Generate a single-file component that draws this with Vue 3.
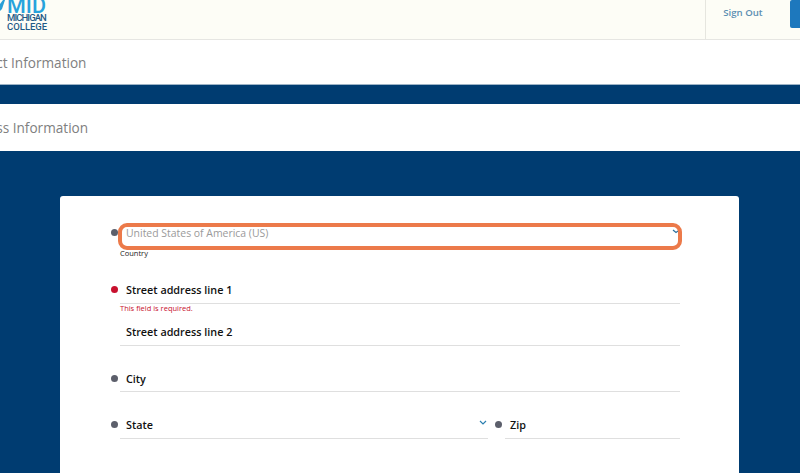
<script setup>
const sections = [
  { title: 'Contact Information', cls: 'sec-contact' },
  { title: 'Address Information', cls: 'sec-address' }
]
</script>

<template>
  <div class="page">
    <header class="topbar">
      <div class="logo">
        <svg class="swoosh" width="6" height="14" viewBox="0 0 6 14"><path d="M0 4 L3 0 L5 0 L2 9 L0 11 Z" fill="#2a9fd6" /></svg>
        <div class="logo-text">
          <div class="logo-mid">MID</div>
          <div class="logo-sub logo-michigan">MICHIGAN</div>
          <div class="logo-sub">COLLEGE</div>
        </div>
      </div>
      <div class="signout">Sign Out</div>
      <div class="topbtn"></div>
    </header>

    <section class="band" :class="sections[0].cls"><h2>{{ sections[0].title }}</h2></section>
    <section class="band" :class="sections[1].cls"><h2>{{ sections[1].title }}</h2></section>

    <main class="navy">
      <div class="card">
        <div class="row row-country">
          <span class="dot"></span>
          <div class="field">
            <div class="select-val">United States of America (US)</div>
            <svg class="chev chev-country" width="7" height="5" viewBox="0 0 7 5"><path d="M1 1 L4 3.5 L6 2" fill="none" stroke="#2b6f9e" stroke-width="1.2" /></svg>
            <div class="sublabel">Country</div>
          </div>
          <div class="highlight"></div>
        </div>

        <div class="row row-s1">
          <span class="dot dot-red"></span>
          <div class="field">
            <div class="input">Street address line 1</div>
            <div class="error">This field is required.</div>
          </div>
        </div>

        <div class="row row-s2">
          <span class="dot dot-none"></span>
          <div class="field"><div class="input">Street address line 2</div></div>
        </div>

        <div class="row row-city">
          <span class="dot"></span>
          <div class="field"><div class="input input-city">City</div></div>
        </div>

        <div class="row row-state">
          <span class="dot"></span>
          <div class="field field-state">
            <div class="input">State</div>
            <svg class="chev chev-state" width="8" height="5" viewBox="0 0 8 5"><path d="M1 1 L4 4 L7 1" fill="none" stroke="#2b7fb0" stroke-width="1.2" /></svg>
          </div>
          <span class="dot dot-zip"></span>
          <div class="field field-zip"><div class="input">Zip</div></div>
        </div>
      </div>
    </main>
  </div>
</template>

<style>
html, body { margin: 0; padding: 0; background: #003c71; }
</style>

<style scoped>
.page {
  width: 800px;
  height: 473px;
  overflow: hidden;
  display: flex;
  flex-direction: column;
  font-family: "Open Sans", "Liberation Sans", sans-serif;
  background: #003c71;
}
.topbar {
  height: 39px;
  flex: none;
  background: #fdfdf6;
  border-bottom: 1px solid #e6e6e2;
  display: flex;
  align-items: stretch;
  overflow: hidden;
}
.logo {
  display: flex;
  align-items: flex-start;
  flex: 1;
}
.swoosh { flex: none; margin-right: 1px; }
.logo-text { margin-top: -9px; }
.logo-mid {
  font-family: "Roboto", "Liberation Sans", sans-serif;
  font-size: 21.5px;
  line-height: 29px;
  height: 23px;
  font-weight: 500;
  color: #27a3dc;
}
.logo-sub {
  font-family: "Roboto", "Liberation Sans", sans-serif;
  font-size: 9.5px;
  line-height: 8.5px;
  font-weight: 500;
  color: #1f5a86;
}
.logo-michigan { letter-spacing: -0.9px; }
.signout {
  width: 74px;
  padding-right: 10px;
  flex: none;
  border-left: 1px solid #e6e6df;
  font-size: 9.6px;
  font-weight: 600;
  color: #5b8fb2;
  text-align: center;
  line-height: 26px;
}
.topbtn {
  width: 10px;
  height: 28px;
  flex: none;
  background: #1d78bd;
  border-radius: 2px 0 0 2px;
}
.band {
  flex: none;
  background: #fff;
  overflow: hidden;
  display: flex;
  align-items: center;
}
.band h2 {
  margin: 0;
  font-size: 13.6px;
  font-weight: 400;
  color: #808080;
  white-space: nowrap;
}
.sec-contact { height: 45px; border-bottom: 1px solid #9db3c6; box-sizing: border-box; }
.sec-contact h2 { margin-left: -41.3px; }
.sec-address { height: 47px; margin-top: 19px; }
.sec-address h2 { margin-left: -42.2px; }
.navy {
  flex: none;
  background: #003c71;
  padding: 45px 61px 0 60px;
}
.card {
  height: 320px;
  background: #fff;
  border-radius: 3px;
  padding-top: 28px;
  padding-left: 51px;
  padding-right: 59px;
  box-sizing: border-box;
}
.row {
  display: flex;
  align-items: flex-start;
  position: relative;
}
.dot {
  width: 7px;
  height: 7px;
  border-radius: 50%;
  background: #5c5f6b;
  flex: none;
  margin-top: 3px;
  margin-right: 2px;
}
.dot-red { background: #c8102e; }
.dot-none { background: transparent; }
.field { flex: 1; position: relative; }
.select-val {
  font-size: 10.45px;
  line-height: 14px;
  color: #9a9a9a;
  padding-left: 6px;
}
.sublabel {
  font-size: 7.5px;
  line-height: 10px;
  color: #222;
  margin-top: 8px;
  font-weight: 500;
}
.highlight {
  position: absolute;
  left: 7px;
  top: -3px;
  width: 564px;
  height: 27px;
  border: 4px solid #ec7a4a;
  border-radius: 9px;
  box-sizing: border-box;
}
.input {
  font-size: 10.8px;
  font-weight: 600;
  line-height: 14px;
  color: #111;
  padding-left: 6px;
  padding-bottom: 6px;
  border-bottom: 1px solid #dfdfdf;
}
.input-city { padding-bottom: 5px; }
.error {
  font-size: 7.5px;
  line-height: 10px;
  color: #c8102e;
  margin-top: -1px;
}
.chev { position: absolute; }
.chev-country { right: 1px; top: 3px; }
.chev-state { right: 1px; top: 2px; }
.row-country { margin-top: 2px; }
.row-s1 { margin-top: 25px; }
.row-s2 { margin-top: 12px; }
.row-city { margin-top: 26px; }
.row-state { margin-top: 26px; }
.field-state { flex: none; width: 368px; }
.dot-zip { margin-left: 7px; margin-right: 3px; }
.field-zip { flex: 1; }
.field-zip .input { padding-left: 5px; }
</style>
